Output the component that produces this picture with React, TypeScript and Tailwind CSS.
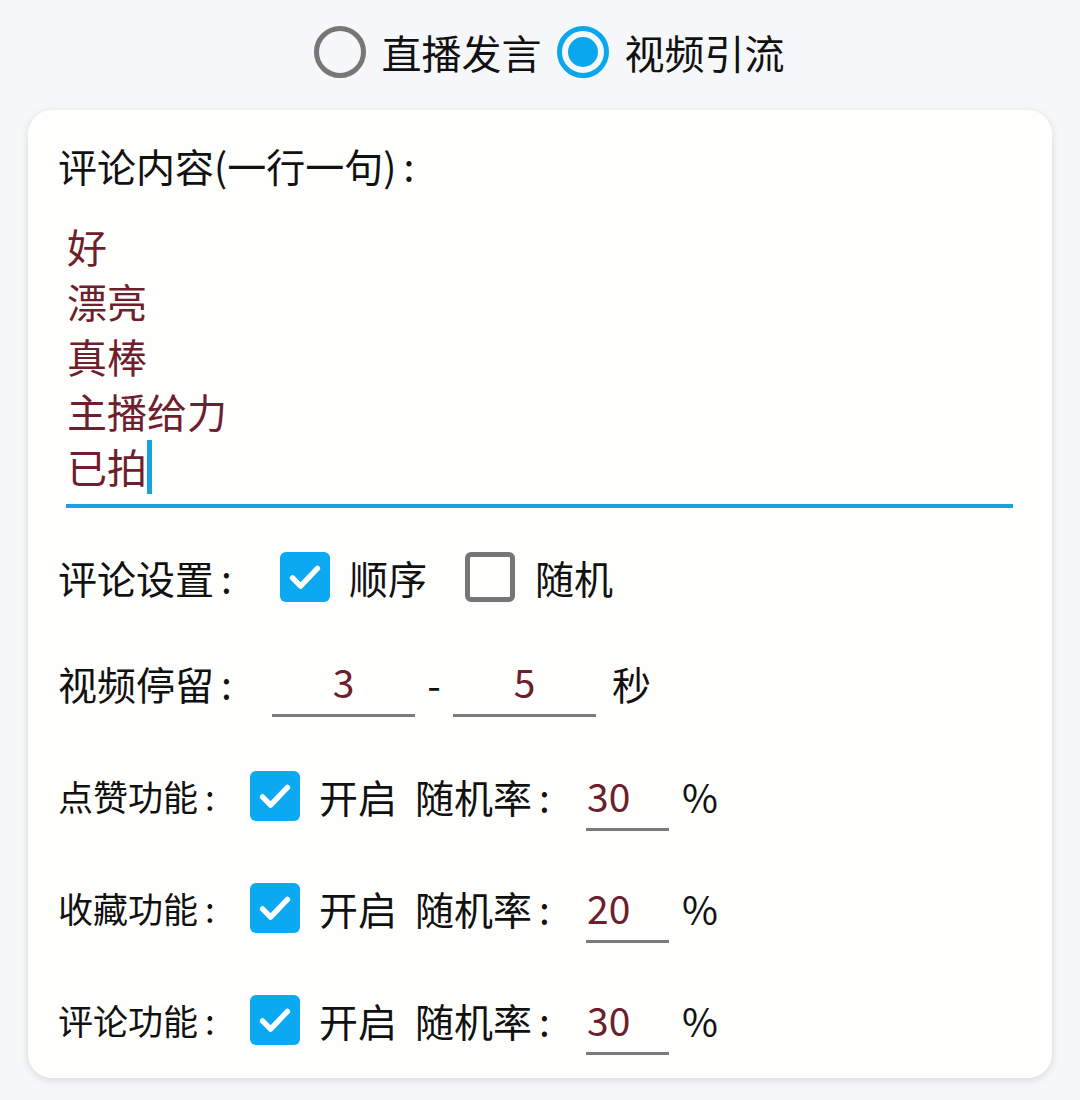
import React from 'react'

const font = { fontFamily: '"Noto Sans CJK SC", "Noto Sans", sans-serif' }

function Radio({ checked }: { checked?: boolean }) {
  return checked ? (
    <span className="flex h-[52px] w-[52px] items-center justify-center rounded-full border-[5px] border-[#0aa6ee]">
      <span className="h-[30px] w-[30px] rounded-full bg-[#0aa6ee]" />
    </span>
  ) : (
    <span className="h-[52px] w-[52px] rounded-full border-[5px] border-[#777777]" />
  )
}

function Check({ checked }: { checked?: boolean }) {
  if (!checked) {
    return <span className="h-[50px] w-[50px] shrink-0 rounded-[6px] border-[5px] border-[#767676]" />
  }
  return (
    <span className="flex h-[50px] w-[50px] shrink-0 items-center justify-center rounded-[6px] bg-[#0ba9f1]">
      <svg viewBox="0 0 24 24" className="h-[46px] w-[46px]" fill="none" stroke="white" strokeWidth={2.8} strokeLinecap="round" strokeLinejoin="round">
        <path d="M5.5 12.5l4.2 4.3L18.5 7.5" />
      </svg>
    </span>
  )
}

function Label({ text, className }: { text: string; className: string }) {
  return (
    <div className={className}>
      {text}
      <span className="ml-[7px]">:</span>
    </div>
  )
}

function RateRow({ label, value }: { label: string; value: string }) {
  return (
    <div className="flex h-[112px] items-center">
      <Label text={label} className="w-[192px] text-[35px] text-[#111]" />
      <Check checked />
      <div className="ml-[19px] w-[96px] text-[39px] text-[#111]">开启</div>
      <Label text="随机率" className="w-[171px] text-[39px] text-[#111]" />
      <div className="flex h-[70px] w-[83px] items-center border-b-[3px] border-[#7b7b7b] pl-[1px] pt-[2px] text-[39px] text-[#6e1e2c]">{value}</div>
      <div className="ml-[13px] text-[39px] text-[#111]">%</div>
    </div>
  )
}

export default function App() {
  const lines = ['好', '漂亮', '真棒', '主播给力']
  return (
    <div className="min-h-[1100px] w-[1080px] bg-[#f6f7f9]" style={font}>
      <div className="flex h-[104px] items-center justify-center pl-[18px]">
        <div className="flex items-center">
          <Radio />
          <span className="ml-[16px] text-[40px] text-[#111]">直播发言</span>
          <span className="ml-[15px]"><Radio checked /></span>
          <span className="ml-[16px] text-[40px] text-[#111]">视频引流</span>
        </div>
      </div>

      <div className="mx-[28px] mt-[6px] h-[968px] rounded-[24px] bg-[#fefefc] pl-[30px] pr-[39px] pt-[27px] shadow-[0_2px_8px_rgba(0,0,0,0.12)]">
        <Label text="评论内容(一行一句)" className="h-[56px] text-[39px] leading-[56px] text-[#111]" />

        <div className="ml-[8px] mt-[26px] border-b-[4px] border-[#16a3e0] pb-[10px] pl-[1px] text-[40px] leading-[55px] text-[#6e1e2c]">
          {lines.map((l) => (
            <div key={l}>{l}</div>
          ))}
          <div className="flex items-center">
            已拍
            <span className="h-[54px] w-[5px] bg-[#16a3e0]" />
          </div>
        </div>

        <div className="mt-[16px] flex h-[106px] items-center">
          <Label text="评论设置" className="w-[222px] text-[39px] text-[#111]" />
          <Check checked />
          <div className="ml-[19px] w-[116px] text-[39px] text-[#111]">顺序</div>
          <Check />
          <div className="ml-[20px] text-[39px] text-[#111]">随机</div>
        </div>

        <div className="flex h-[106px] items-center">
          <Label text="视频停留" className="w-[214px] text-[39px] text-[#111]" />
          <div className="flex h-[68px] w-[143px] items-center justify-center border-b-[3px] border-[#7b7b7b] text-[39px] text-[#6e1e2c]">3</div>
          <div className="w-[38px] text-center text-[39px] text-[#111]">-</div>
          <div className="flex h-[68px] w-[143px] items-center justify-center border-b-[3px] border-[#7b7b7b] text-[39px] text-[#6e1e2c]">5</div>
          <div className="ml-[16px] text-[39px] text-[#111]">秒</div>
        </div>

        <div className="mt-[4px]">
          <RateRow label="点赞功能" value="30" />
          <RateRow label="收藏功能" value="20" />
          <RateRow label="评论功能" value="30" />
        </div>
      </div>
    </div>
  )
}
